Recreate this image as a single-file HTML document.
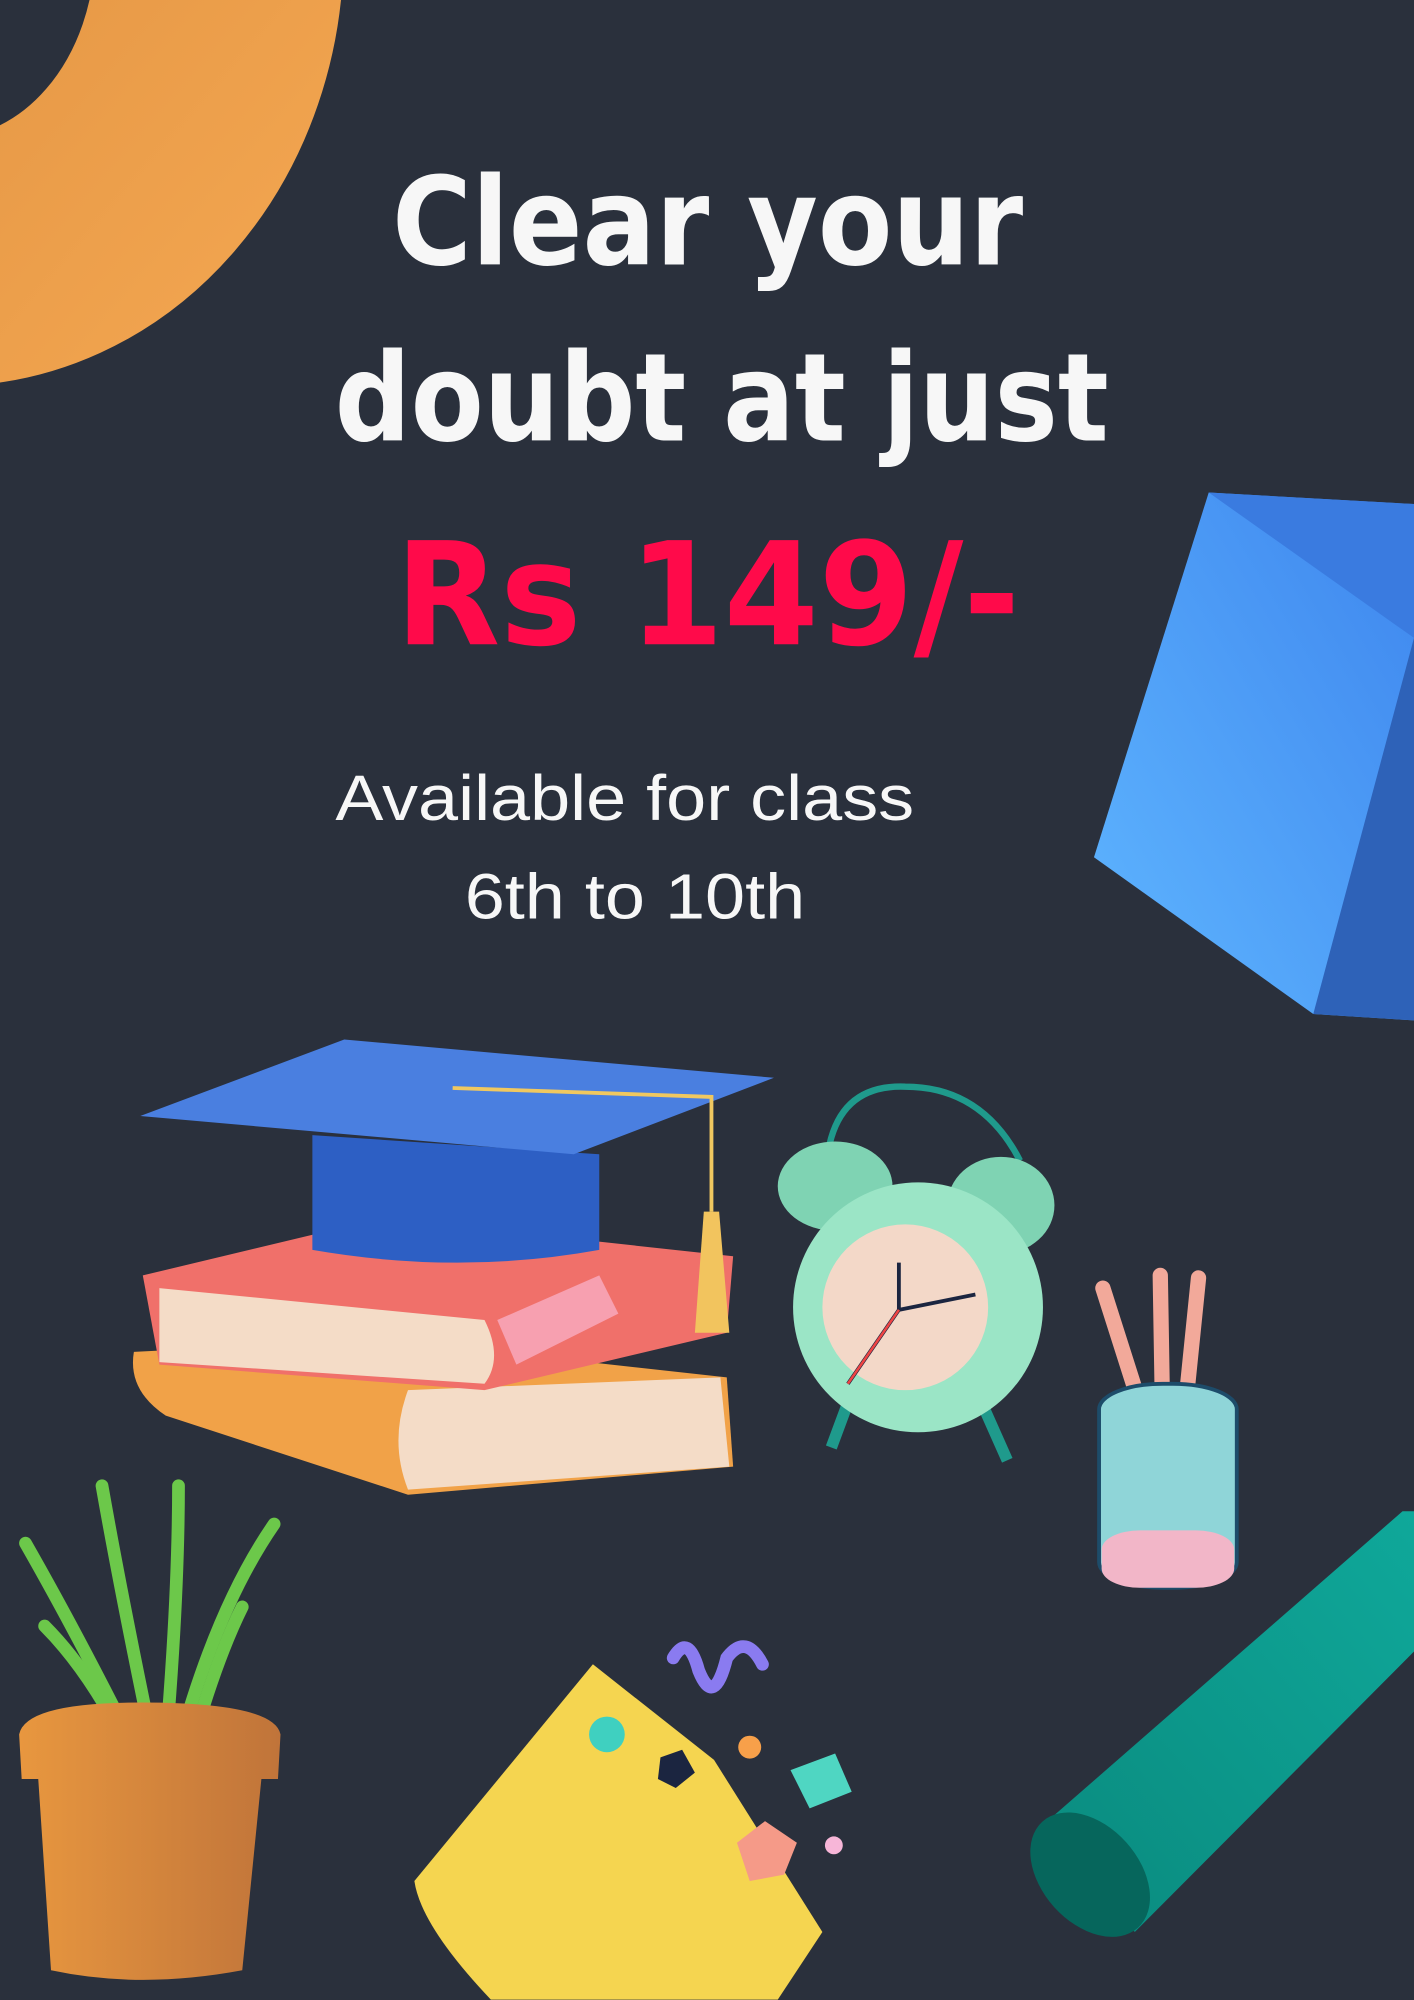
<!DOCTYPE html>
<html><head><meta charset="utf-8"><style>
html,body{margin:0;padding:0;background:#2a303c;}
svg{display:block}
</style></head><body>
<svg width="1414" height="2000" viewBox="0 0 1109 1568" xmlns="http://www.w3.org/2000/svg">
<defs>
<linearGradient id="ring" x1="0" y1="0" x2="1" y2="1"><stop offset="0" stop-color="#d98a3c"/><stop offset="1" stop-color="#f0a34e"/></linearGradient>
<linearGradient id="cube" x1="0" y1="1" x2="1" y2="0"><stop offset="0" stop-color="#5fb6ff"/><stop offset="1" stop-color="#3e86ee"/></linearGradient>
<linearGradient id="cyl" x1="0" y1="1" x2="1" y2="0"><stop offset="0" stop-color="#0a8a7e"/><stop offset="1" stop-color="#0fa89a"/></linearGradient>
<linearGradient id="pot" x1="0" y1="0" x2="1" y2="0"><stop offset="0" stop-color="#e8973f"/><stop offset="1" stop-color="#c0743a"/></linearGradient>
</defs>
<rect width="1109" height="1568" fill="#2a303c"/>
<ellipse cx="-40" cy="-40" rx="212" ry="245" fill="none" stroke="url(#ring)" stroke-width="195"/>
<!-- cube -->
<polygon points="948,386 1109,395 1109,800 1030,795 858,672" fill="url(#cube)"/>
<polygon points="948,386 1109,395 1109,500" fill="#3a7be0"/>
<polygon points="1109,500 1109,800 1030,795" fill="#2e62b8"/>
<!-- text -->
<g font-family="'DejaVu Sans','Liberation Sans',sans-serif" fill="#f7f7f7" text-anchor="middle">
<text x="555" y="207" font-size="96" font-weight="bold" textLength="495" lengthAdjust="spacingAndGlyphs">Clear your</text>
<text x="566" y="345" font-size="96" font-weight="bold" textLength="607" lengthAdjust="spacingAndGlyphs">doubt at just</text>
<text x="555" y="505" font-size="112" font-weight="bold" fill="#ff0a4a" textLength="490" lengthAdjust="spacingAndGlyphs">Rs 149/-</text>
<text x="490" y="643" font-size="50" font-family="'Liberation Sans',sans-serif" textLength="454" lengthAdjust="spacingAndGlyphs">Available for class</text>
<text x="498" y="720" font-size="50" font-family="'Liberation Sans',sans-serif" textLength="267" lengthAdjust="spacingAndGlyphs">6th to 10th</text>
</g>
<!-- cylinder -->
<polygon points="825,1425 1100,1185 1109,1185 1109,1295 890,1515" fill="url(#cyl)"/>
<ellipse cx="855" cy="1470" rx="38" ry="56" transform="rotate(-42 855 1470)" fill="#06665c"/>
<!-- books -->
<path d="M105,1060 L300,1050 L570,1080 L575,1150 L320,1172 L130,1110 Q100,1090 105,1060Z" fill="#f1a248"/>
<path d="M320,1090 L565,1080 L572,1150 L320,1168 Q305,1130 320,1090Z" fill="#f4dcc7"/>
<path d="M112,1000 L300,955 L575,985 L570,1045 L380,1090 L125,1070Z" fill="#f0706a"/>
<path d="M125,1010 L380,1035 Q395,1065 380,1085 L125,1068Z" fill="#f4dcc7"/>
<path d="M390,1035 L470,1000 L485,1030 L405,1070Z" fill="#f7a0b0"/>
<!-- cap -->
<path d="M245,890 L470,905 L470,980 Q360,1000 245,980Z" fill="#2d5fc4"/>
<polygon points="110,875 270,815 607,845 450,905" fill="#4a7fe0"/>
<path d="M355,853 L558,860 L558,950" stroke="#f0c860" stroke-width="3" fill="none"/>
<polygon points="552,950 564,950 572,1045 545,1045" fill="#f2c45e"/>
<!-- clock -->
<path d="M650,900 Q660,850 710,852 Q770,852 800,910" stroke="#1f9a8c" stroke-width="5" fill="none"/>
<ellipse cx="655" cy="930" rx="45" ry="35" fill="#7fd3b3"/>
<ellipse cx="785" cy="945" rx="42" ry="38" fill="#7fd3b3"/>
<path d="M665,1100 L652,1135 M770,1100 L790,1145" stroke="#1f9a8c" stroke-width="9"/>
<circle cx="720" cy="1025" r="98" fill="#9be5c6"/>
<circle cx="710" cy="1025" r="65" fill="#f3d8c8"/>
<path d="M705,1027 L705,990 M705,1027 L765,1015 M705,1027 L665,1085" stroke="#1b2540" stroke-width="3"/>
<path d="M705,1027 L665,1085" stroke="#e44" stroke-width="2"/>
<!-- pencil cup -->
<path d="M865,1010 L900,1120 M910,1000 L912,1120 M940,1002 L928,1120" stroke="#f2a99a" stroke-width="12" stroke-linecap="round"/>
<rect x="862" y="1085" width="108" height="160" rx="50" ry="20" fill="#8fd5d8" stroke="#1d4c6a" stroke-width="3"/>
<rect x="864" y="1200" width="104" height="45" rx="30" ry="15" fill="#f2b6c8"/>
<!-- plant -->
<g stroke="#6cc84a" stroke-width="10" stroke-linecap="round" fill="none">
<path d="M105,1370 Q60,1280 20,1210"/><path d="M120,1370 Q95,1250 80,1165"/><path d="M130,1370 Q140,1250 140,1165"/><path d="M140,1370 Q170,1260 215,1195"/><path d="M100,1370 Q70,1310 35,1275"/><path d="M150,1370 Q170,1300 190,1260"/>
</g>
<path d="M15,1360 Q20,1335 110,1335 Q215,1335 220,1360 L218,1395 L205,1395 L190,1545 Q110,1560 40,1545 L30,1395 L17,1395Z" fill="url(#pot)"/>
<!-- folder -->
<path d="M325,1475 L465,1305 L560,1380 L645,1515 L610,1568 L385,1568 Q330,1510 325,1475Z" fill="#f5d550"/>
<path d="M528,1300 Q540,1280 548,1310 Q560,1340 570,1300 Q585,1280 598,1305" stroke="#8a7bf0" stroke-width="10" fill="none" stroke-linecap="round"/>
<circle cx="476" cy="1360" r="14" fill="#3fd0c0"/>
<polygon points="518,1378 535,1372 545,1390 530,1402 516,1395" fill="#1b2540"/>
<circle cx="588" cy="1370" r="9" fill="#f7a04a"/>
<polygon points="620,1388 655,1375 668,1405 635,1418" fill="#4fd6c2"/>
<polygon points="578,1445 600,1428 625,1445 615,1470 588,1475" fill="#f59a88"/>
<circle cx="654" cy="1447" r="7" fill="#f7b6d8"/>
</svg>
</body></html>
